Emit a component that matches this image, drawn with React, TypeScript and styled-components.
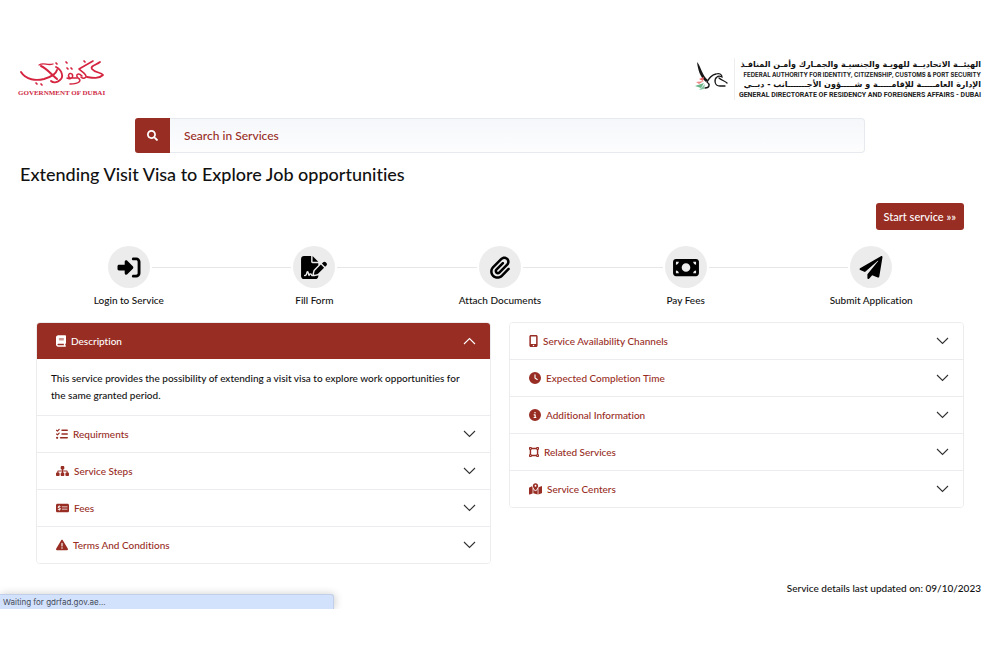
import React from "react";
import styled, { createGlobalStyle } from "styled-components";
import { FaPaperPlane, FaSearch } from "react-icons/fa";
import {
  FaBook,
  FaCircleInfo,
  FaClock,
  FaFileSignature,
  FaListCheck,
  FaMapLocationDot,
  FaMobileScreenButton,
  FaMoneyBill,
  FaMoneyCheckDollar,
  FaPaperclip,
  FaRightToBracket,
  FaSitemap,
  FaTriangleExclamation,
  FaVectorSquare,
} from "react-icons/fa6";

const brand = "#982d24";

const GlobalStyle = createGlobalStyle`
  * { box-sizing: border-box; }
  body {
    margin: 0;
    background: #fff;
    color: #111;
    font-family: Lato, "Noto Sans", sans-serif;
    font-size: 10px;
    font-weight: 500;
    font-variant-ligatures: no-common-ligatures;
  }
  button, input { font: inherit; font-variant-ligatures: inherit; }
`;

const Page = styled.div`
  padding-top: 58px;
`;

const Header = styled.header`
  display: flex;
  justify-content: space-between;
  align-items: flex-start;
  padding: 0 19px 0 18px;
`;

const DubaiLogo = styled.div`
  display: flex;
  flex-direction: column;
  align-items: center;
  color: #cf2a45;
  font: bold 7px/8px "Liberation Serif", serif;
  white-space: nowrap;
`;

const Authority = styled.div`
  display: flex;
  align-items: flex-start;
`;

const AuthorityText = styled.div`
  display: flex;
  flex-direction: column;
  align-items: flex-end;
  margin-left: 4px;
  padding: 2px 0 0 4px;
  border-left: 1px solid #eee;
  white-space: nowrap;
`;

const Arabic = styled.span`
  font: bold 8px/10px "DejaVu Sans", sans-serif;
`;

const English = styled.span<{ $wide?: boolean }>`
  color: #222;
  font: ${(p) => (p.$wide ? "bold 6px/10px Inter" : "bold 7px/10px Roboto")}, sans-serif;
`;

const Search = styled.form`
  display: flex;
  width: 73%;
  height: 35px;
  margin: 18px auto 0;
`;

const SearchButton = styled.button`
  display: flex;
  align-items: center;
  justify-content: center;
  width: 35px;
  padding: 0;
  border: 0;
  border-radius: 3px 0 0 3px;
  background: ${brand};
  color: #fff;
  font-size: 11px;
`;

const SearchInput = styled.input`
  flex: 1;
  min-width: 0;
  padding: 0 14px;
  border: 1px solid #e6e9ed;
  border-left: 0;
  border-radius: 0 4px 4px 0;
  background: linear-gradient(#f5f7fa, #fdfdfe);
  font-size: 12px;
  &::placeholder { color: ${brand}; opacity: 1; }
`;

const Title = styled.h1`
  margin: 7px 20px 0;
  font-size: 18px;
  line-height: 28px;
  font-weight: 500;
`;

const Main = styled.main`
  padding: 0 36px;
`;

const Actions = styled.div`
  display: flex;
  justify-content: flex-end;
  margin-top: 15px;
`;

const StartButton = styled.button`
  height: 27px;
  padding: 0 8px;
  border: 0;
  border-radius: 3px;
  background: ${brand};
  color: #fff;
  font-size: 11px;
`;

const Steps = styled.ol`
  display: grid;
  grid-template-columns: repeat(5, 1fr);
  margin: 16px 0 0;
  padding: 0;
  list-style: none;
`;

const Step = styled.li`
  display: flex;
  flex-direction: column;
  align-items: center;
  line-height: 14px;
`;

const Track = styled.div`
  display: flex;
  align-items: center;
  gap: 2px;
  width: 100%;
  margin-bottom: 5px;
`;

const Line = styled.span<{ $hidden: boolean }>`
  flex: 1;
  height: 1px;
  background: ${(p) => (p.$hidden ? "transparent" : "#e6e6e6")};
`;

const Circle = styled.span`
  display: flex;
  align-items: center;
  justify-content: center;
  width: 42px;
  height: 42px;
  border-radius: 50%;
  background: #ececec;
  color: #000;
  svg { width: 26px; height: 23px; }
`;

const Columns = styled.div`
  display: grid;
  grid-template-columns: 1fr 1fr;
  align-items: start;
  gap: 18px;
  margin-top: 15px;
`;

const Accordion = styled.section`
  border: 1px solid #ececee;
  border-radius: 4px;
  overflow: hidden;
`;

const Item = styled.div`
  & + & { border-top: 1px solid #ececee; }
`;

const ItemButton = styled.button<{ $open: boolean }>`
  display: flex;
  align-items: center;
  width: 100%;
  height: 36px;
  padding: 0 14px 0 19px;
  border: 0;
  background: ${(p) => (p.$open ? brand : "#fff")};
  color: ${(p) => (p.$open ? "#fff" : brand)};
  text-align: left;
`;

const ItemIcon = styled.span<{ $width: number }>`
  display: flex;
  margin-right: 5px;
  svg { width: ${(p) => p.$width}px; height: 12px; }
`;

const ItemLabel = styled.span`
  flex: 1;
`;

const ItemBody = styled.p`
  margin: 0;
  padding: 11px 20px 11px 14px;
  line-height: 17px;
`;

const Footer = styled.footer`
  display: flex;
  justify-content: space-between;
  align-items: flex-end;
  height: 45px;
  overflow: hidden;
`;

const StatusBar = styled.div`
  width: 33.4%;
  height: 15px;
  padding-left: 3px;
  border-top: 1px solid #c2cfe8;
  border-right: 1px solid #c2cfe8;
  border-radius: 0 3px 0 0;
  background: #d3e2fc;
  box-shadow: 1px 0 9px rgba(0, 0, 0, 0.2);
  color: #454c5a;
  font: 8px/14px Inter, sans-serif;
`;

const Updated = styled.p`
  margin: 0 19px 13px 0;
  line-height: 16px;
`;

const Chevron = ({ up }: { up: boolean }) => (
  <svg width="13" height="8" viewBox="0 0 13 8" fill="none" stroke={up ? "#fff" : "#333"} strokeWidth="1.1" aria-hidden="true">
    <path d={up ? "M1 7 6.500 1.500 12 7" : "M1 1 6.500 6.500 12 1"} />
  </svg>
);

const Calligraphy = () => (
  <svg width="84" height="31" viewBox="0 0 84 31" fill="none" stroke="#d5243f" strokeLinecap="round" strokeLinejoin="round" aria-hidden="true">
    <path d="M1 14C6 22 16 23 24 21C31 19 36 16 37 12" strokeWidth="1.900" />
    <path d="M19 7C24 4 27 8 33 6" strokeWidth="1.300" />
    <path d="M21 8C26 10 30 15 37 21" strokeWidth="2" />
    <path d="M36 9C42 12 44 19 40 22C37 25 33 25 31 23" strokeWidth="1.800" />
    <path d="M47 20C51 22 54 19 52 16C49 14 47 18 50 20H57" strokeWidth="1.400" />
    <path d="M62 18C58 14 55 17 58 20C62 22 60 26 50 26" strokeWidth="1.500" />
    <path d="M73 3 59 11C62 14 67 16 66 19C64 21 62 20 61 19" strokeWidth="1.600" />
    <path d="M80 4C76 7 70 8 72 11C75 15 81 14 83 17C79 21 73 20 67 19" strokeWidth="1.800" />
    <path d="M16 25 17 26M21 26 22 27M36 5 37 6M46 4 47 5M47 10 48 11M51 10 52 11M64 3 65 4" strokeWidth="1.700" />
  </svg>
);

const Falcon = () => (
  <svg width="36" height="35" viewBox="0 0 36 35" fill="none" aria-hidden="true">
    <path d="M3 4C7 8 8 18 14 22L12 24C6 19 4 12 3 4Z" fill="#171717" />
    <path d="M11 30C16 30 16 26 13 24C15 20 17 17 22 16C25 15 28 16 28 19C26 18 24 18 23 19C20 21 20 28 26 28H31M25 20C27 22 31 23 33 25" stroke="#171717" strokeWidth="1.300" strokeLinecap="round" />
    <path d="M5 21 10 19 9 23Z" fill="#e66" />
    <path d="M2 24 10 23 5 26Z" fill="#e88" />
    <path d="M1 28 10 25 7 30Z" fill="#6bb58a" />
    <path d="M5 32 11 26 10 31Z" fill="#8cc5a3" />
  </svg>
);

type Entry = { label: string; icon: React.ReactNode; width: number; body?: string };

const steps = [
  { label: "Login to Service", icon: <FaRightToBracket /> },
  { label: "Fill Form", icon: <FaFileSignature /> },
  { label: "Attach Documents", icon: <FaPaperclip /> },
  { label: "Pay Fees", icon: <FaMoneyBill /> },
  { label: "Submit Application", icon: <FaPaperPlane /> },
];

const left: Entry[] = [
  {
    label: "Description",
    icon: <FaBook />,
    width: 10,
    body: "This service provides the possibility of extending a visit visa to explore work opportunities for the same granted period.",
  },
  { label: "Requirments", icon: <FaListCheck />, width: 12 },
  { label: "Service Steps", icon: <FaSitemap />, width: 13 },
  { label: "Fees", icon: <FaMoneyCheckDollar />, width: 13 },
  { label: "Terms And Conditions", icon: <FaTriangleExclamation />, width: 12 },
];

const right: Entry[] = [
  { label: "Service Availability Channels", icon: <FaMobileScreenButton />, width: 9 },
  { label: "Expected Completion Time", icon: <FaClock />, width: 12 },
  { label: "Additional Information", icon: <FaCircleInfo />, width: 12 },
  { label: "Related Services", icon: <FaVectorSquare />, width: 10 },
  { label: "Service Centers", icon: <FaMapLocationDot />, width: 13 },
];

const Panel = ({ entries }: { entries: Entry[] }) => (
  <Accordion>
    {entries.map((e) => (
      <Item key={e.label}>
        <ItemButton type="button" $open={!!e.body} aria-expanded={!!e.body}>
          <ItemIcon $width={e.width}>{e.icon}</ItemIcon>
          <ItemLabel>{e.label}</ItemLabel>
          <Chevron up={!!e.body} />
        </ItemButton>
        {e.body && <ItemBody>{e.body}</ItemBody>}
      </Item>
    ))}
  </Accordion>
);

export default function App() {
  return (
    <Page>
      <GlobalStyle />
      <Header>
        <DubaiLogo>
          <Calligraphy />
          GOVERNMENT OF DUBAI
        </DubaiLogo>
        <Authority>
          <Falcon />
          <AuthorityText>
            <Arabic lang="ar" dir="rtl">الهيئــة الاتحاديــة للهويـة والجنسيـة والجمـارك وأمـن المنافـذ</Arabic>
            <English $wide>FEDERAL AUTHORITY FOR IDENTITY, CITIZENSHIP, CUSTOMS &amp; PORT SECURITY</English>
            <Arabic lang="ar" dir="rtl">الإدارة العامـــــة للإقامـــــة و شـــــؤون الأجـــــــانب - دبــي</Arabic>
            <English>GENERAL DIRECTORATE OF RESIDENCY AND FOREIGNERS AFFAIRS - DUBAI</English>
          </AuthorityText>
        </Authority>
      </Header>
      <Search>
        <SearchButton type="button" aria-label="Search">
          <FaSearch />
        </SearchButton>
        <SearchInput type="text" placeholder="Search in Services" aria-label="Search in Services" />
      </Search>
      <Title>Extending Visit Visa to Explore Job opportunities</Title>
      <Main>
        <Actions>
          <StartButton type="button">Start service »»</StartButton>
        </Actions>
        <Steps>
          {steps.map((s, i) => (
            <Step key={s.label}>
              <Track>
                <Line $hidden={i === 0} />
                <Circle>{s.icon}</Circle>
                <Line $hidden={i === steps.length - 1} />
              </Track>
              {s.label}
            </Step>
          ))}
        </Steps>
        <Columns>
          <Panel entries={left} />
          <Panel entries={right} />
        </Columns>
      </Main>
      <Footer>
        <StatusBar role="status">Waiting for gdrfad.gov.ae...</StatusBar>
        <Updated>Service details last updated on: 09/10/2023</Updated>
      </Footer>
    </Page>
  );
}
